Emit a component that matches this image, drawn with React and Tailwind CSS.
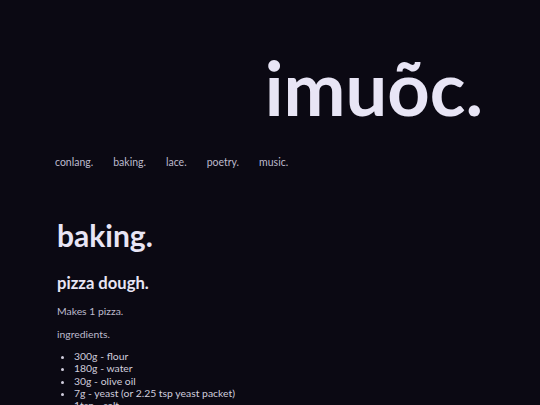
export default function App() {
  return (
    <div className="min-h-[405px] w-full bg-[#0b0913] text-[#e8e5f5]" style={{ fontFamily: 'Lato, sans-serif' }}>
      <div className="px-[57px] pt-[46px]">
        <header className="flex justify-end">
          <h1 className="text-[74px] font-bold leading-[84px]">imuõc.</h1>
        </header>
        <nav className="mt-[25px] flex gap-[20px] -ml-[2px] text-[10.5px] text-[#bdbacd]">
          <span>conlang.</span>
          <span>baking.</span>
          <span>lace.</span>
          <span>poetry.</span>
          <span>music.</span>
        </nav>
        <main className="mt-[46px]">
          <h2 className="text-[30px] font-bold leading-[36px]">baking.</h2>
          <h3 className="mt-[18px] text-[16.6px] font-bold leading-[24px]">pizza dough.</h3>
          <p className="mt-[8px] text-[10.4px] leading-[16px] text-[#bdbacd]">Makes 1 pizza.</p>
          <p className="mt-[7px] text-[10.4px] leading-[16px] text-[#bdbacd]">ingredients.</p>
          <ul className="mt-[8px] list-disc pl-[17px] text-[10.4px] leading-[12.4px] text-[#d0cddd]">
            <li>300g - flour</li>
            <li>180g - water</li>
            <li>30g - olive oil</li>
            <li>7g - yeast (or 2.25 tsp yeast packet)</li>
            <li>1tsp - salt</li>
          </ul>
        </main>
      </div>
    </div>
  );
}
